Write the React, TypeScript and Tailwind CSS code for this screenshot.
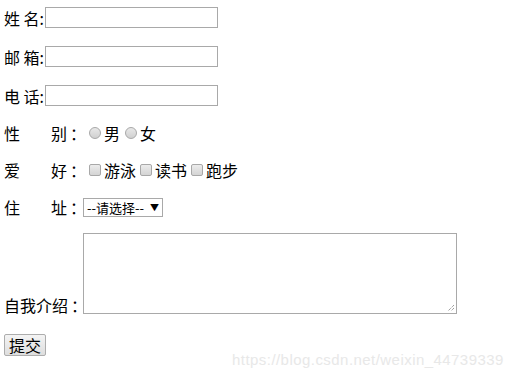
import React from 'react';

const font = { fontFamily: '"Noto Sans CJK SC", "Liberation Sans", sans-serif' };

const Radio = () => (
  <span className="inline-block w-[12px] h-[12px] rounded-full border border-[#a8a8a8] bg-gradient-to-b from-[#e8e8e8] to-[#d0d0d0]" />
);

const Check = () => (
  <span className="inline-block w-[12px] h-[12px] rounded-[2px] border border-[#a8a8a8] bg-gradient-to-b from-[#ececec] to-[#d4d4d4]" />
);

const TextField = () => (
  <input type="text" className="w-[173px] h-[21px] border border-[#a9a9a9] bg-white outline-none" />
);

// two-char label spread out, then the full-width colon
const Spread = ({ a, b, w }: { a: string; b: string; w: number }) => (
  <span className="flex shrink-0 whitespace-nowrap" style={{ width: w }}>
    <span className="w-[47px] shrink-0">{a}</span>
    <span className="shrink-0">{b}</span>
    <span className="shrink-0 ml-[3px]">：</span>
  </span>
);

export default function App() {
  return (
    <div className="relative w-[513px] h-[375px] bg-white text-black text-[16px] leading-none pl-[4px]" style={font}>
      {/* text inputs */}
      <div className="flex items-center h-[21px] mt-[7px]">
        <span className="w-[41px] whitespace-pre">姓 名:</span>
        <TextField />
      </div>
      <div className="flex items-center h-[21px] mt-[18px]">
        <span className="w-[41px] whitespace-pre">邮 箱:</span>
        <TextField />
      </div>
      <div className="flex items-center h-[21px] mt-[18px]">
        <span className="w-[41px] whitespace-pre">电 话:</span>
        <TextField />
      </div>

      {/* gender */}
      <div className="flex items-center h-[20px] mt-[17px]">
        <Spread a="性" b="别" w={84} />
        <span className="ml-[1px] flex items-center gap-[3px]">
          <Radio />
          <span>男</span>
        </span>
        <span className="ml-[5px] flex items-center gap-[3px]">
          <Radio />
          <span>女</span>
        </span>
      </div>

      {/* hobbies */}
      <div className="flex items-center h-[20px] mt-[17px]">
        <Spread a="爱" b="好" w={84} />
        <span className="ml-[1px] flex items-center gap-[3px]">
          <Check />
          <span>游泳</span>
        </span>
        <span className="ml-[4px] flex items-center gap-[3px]">
          <Check />
          <span>读书</span>
        </span>
        <span className="ml-[4px] flex items-center gap-[3px]">
          <Check />
          <span>跑步</span>
        </span>
      </div>

      {/* address */}
      <div className="flex items-center h-[20px] mt-[17px]">
        <Spread a="住" b="址" w={79} />
        <span className="flex items-center justify-between w-[80px] h-[19px] border border-[#a9a9a9] px-[3px] text-[13px]">
          <span>--请选择--</span>
          <span className="text-[9px]">▼</span>
        </span>
      </div>

      {/* intro */}
      <div className="flex items-end mt-[16px]">
        <span className="w-[79px] shrink-0 whitespace-nowrap pb-[1px] flex">
          <span className="shrink-0">自我介绍</span>
          <span className="shrink-0 ml-[3px]">：</span>
        </span>
        <div className="relative w-[374px] h-[81px] border border-[#a9a9a9]">
          <svg className="absolute right-[1px] bottom-[1px]" width="8" height="8" viewBox="0 0 8 8">
            <path d="M7 1 L1 7 M7 4 L4 7" stroke="#777" strokeWidth="1" strokeDasharray="1 1" />
          </svg>
        </div>
      </div>

      {/* submit */}
      <button className="mt-[20px] w-[42px] h-[22px] border border-[#adadad] bg-gradient-to-b from-[#f4f4f4] to-[#dedede] text-[16px] leading-none rounded-[2px]">
        提交
      </button>

      <div
        className="absolute left-[232px] top-[345px] text-[15px] text-[#e8e8e8] tracking-[0.45px]"
        style={{ fontFamily: '"Liberation Sans", Arial, sans-serif' }}
      >
        https://blog.csdn.net/weixin_44739339
      </div>
    </div>
  );
}
